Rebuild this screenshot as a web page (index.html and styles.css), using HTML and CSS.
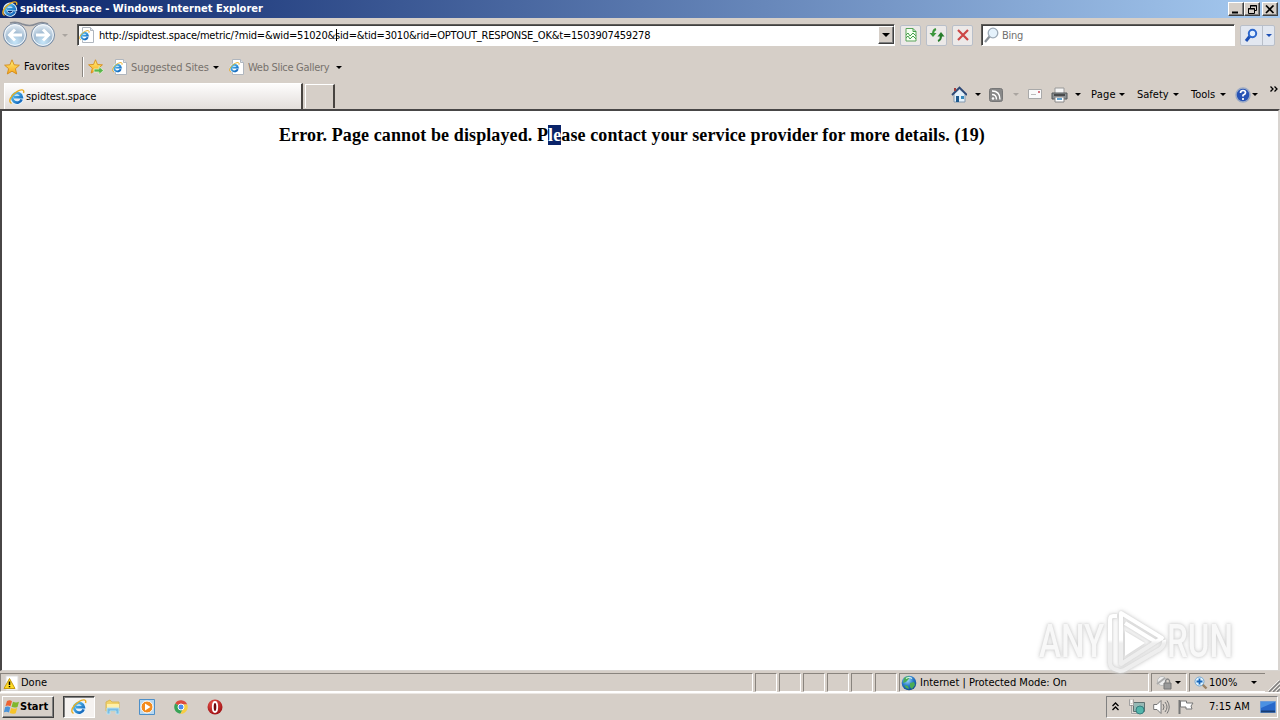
FILE: index.html
```html
<!DOCTYPE html>
<html lang="en">
<head>
    <meta charset="UTF-8">
    <meta name="viewport" content="width=device-width, initial-scale=1.0">
    <title>spidtest.space - Windows Internet Explorer</title>
    <link rel="stylesheet" href="styles.css">
</head>
<body>
    <!-- shared icons -->
    <svg class="defs" width="0" height="0">
        <defs>
            <linearGradient id="ieBlue" x1="0" y1="0" x2="1" y2="1">
                <stop offset="0" stop-color="#5cc8f4"/>
                <stop offset="1" stop-color="#0d5cb5"/>
            </linearGradient>
            <linearGradient id="gold" x1="0" y1="0" x2="0" y2="1">
                <stop offset="0" stop-color="#fff27a"/>
                <stop offset="1" stop-color="#f7a51a"/>
            </linearGradient>
            <radialGradient id="navBall" cx=".5" cy=".8" r=".8">
                <stop offset="0" stop-color="#c5e6fa"/>
                <stop offset=".5" stop-color="#a4bdd3"/>
                <stop offset="1" stop-color="#edf4fa"/>
            </radialGradient>
            <radialGradient id="globe" cx=".4" cy=".3" r=".8">
                <stop offset="0" stop-color="#a5dcff"/>
                <stop offset=".5" stop-color="#2779c9"/>
                <stop offset="1" stop-color="#0b3f7d"/>
            </radialGradient>
            <radialGradient id="red" cx=".4" cy=".3" r=".8">
                <stop offset="0" stop-color="#ee5a50"/>
                <stop offset="1" stop-color="#96060b"/>
            </radialGradient>
            <linearGradient id="fade" gradientUnits="userSpaceOnUse" x1="0" y1="0" x2="0" y2="64">
                <stop offset=".5" stop-color="#fff"/>
                <stop offset=".55" stop-color="#eee"/>
            </linearGradient>
        </defs>
        <symbol id="ie" viewBox="0 0 16 16">
            <path d="M12.8 10.2A5 5 0 1 1 13 8H5" fill="none" stroke="#e6f6ff" stroke-width="4"/>
            <path d="M12.6 10.4A4.8 4.8 0 1 1 12.8 8.1H5" fill="none" stroke="url(#ieBlue)" stroke-width="2.7"/>
            <path d="M2.6 14.4C-1.4 12.7 2 6 7.5 2.8 12-.1 15.8.2 14.5 4" fill="none" stroke="#e9ac22" stroke-width="1.4"/>
        </symbol>
        <symbol id="iepage" viewBox="0 0 16 16">
            <path d="M3.5.5h8l3 3v12h-11z" fill="#fff" stroke="#b0b6be"/>
            <path d="M11.5.5v3h3" fill="#dde4ea" stroke="#b0b6be"/>
            <use href="#ie" x="0" y="3" width="11" height="11"/>
        </symbol>
        <symbol id="star" viewBox="0 0 16 16">
            <path d="M8 .8l2.1 5 5.3.4-4 3.5 1.3 5.3L8 12.2l-4.7 2.8 1.3-5.3-4-3.5 5.3-.4z" fill="url(#gold)" stroke="#d48a17" stroke-width=".9"/>
        </symbol>
    </svg>

    <div class="window">
        <header class="titlebar">
            <svg class="i16"><use href="#ie"/></svg>
            <span class="title">spidtest.space - Windows Internet Explorer</span>
            <div class="winbtns">
                <div class="winbtn"><svg width="11" height="9"><path d="M1 7.5h6" stroke="#000" stroke-width="2"/></svg></div>
                <div class="winbtn"><svg width="11" height="9"><path d="M3.5 3V.5h6v5H8M3 1h7M1.500 3.500h6v5h-6zM1 4h7" fill="none" stroke="#000"/></svg></div>
                <div class="winbtn close"><svg width="10" height="9"><path d="M1 .5l7.500 7.500M8.500.5L1 8" stroke="#000" stroke-width="1.700"/></svg></div>
            </div>
        </header>

        <div class="addressrow">
            <svg class="nav" width="54" height="28" viewBox="0 0 54 28">
                <path d="M8 2q6-2 12 1 8 3 14 0 6-3 12 0" fill="none" stroke="#868b95" stroke-width="1.500"/>
                <circle cx="13" cy="14" r="11.500" fill="url(#navBall)" stroke="#798ba2"/>
                <circle cx="41" cy="14" r="11.500" fill="url(#navBall)" stroke="#798ba2"/>
                <circle cx="13" cy="14" r="10.300" fill="none" stroke="#f4f8fc"/>
                <circle cx="41" cy="14" r="10.300" fill="none" stroke="#f4f8fc"/>
                <path d="M20 14H8M13 8.500L7.500 14l5.500 5.500M34 14h12M41 8.500l5.500 5.500-5.500 5.500" fill="none" stroke="#fff" stroke-width="3"/>
            </svg>
            <i class="arrow pale"></i>
            <div class="address">
                <svg class="i16"><use href="#iepage"/></svg>
                <span class="url">http://spidtest.space/metric/?mid=&amp;wid=51020&amp;sid=&amp;tid=3010&amp;rid=OPTOUT_RESPONSE_OK&amp;t=1503907459278</span>
                <div class="caret"></div>
                <div class="drop"><i class="arrow big"></i></div>
            </div>
            <div class="tool">
                <svg width="14" height="16"><path d="M2 1.500h7l3 3v9.500H2z" fill="#f5fff2" stroke="#5ba35b"/><path d="M9 1.500v3h3M2 8l2-2 2 3 3-3 3 3M2 11l2-2 2 3 3-3 3 3" fill="none" stroke="#45a04b"/></svg>
            </div>
            <div class="tool">
                <svg width="16" height="16"><path d="M7 2Q4 3 4 7" fill="none" stroke="#3d963c" stroke-width="2"/><path d="M.5 6h7L4 10z" fill="#3d963c"/><path d="M9 14q3-1 3-5" fill="none" stroke="#267c2b" stroke-width="2"/><path d="M8.500 9.500h7L12 5z" fill="#267c2b"/></svg>
            </div>
            <div class="tool">
                <svg width="14" height="14"><path d="M2 2l10 10M12 2L2 12" stroke="#cc4747" stroke-width="2.200"/></svg>
            </div>
            <div class="search">
                <svg width="16" height="17"><path d="M6 9l-5 6" stroke="#8b9299" stroke-width="2.300"/><circle cx="9" cy="6" r="4.800" fill="#e5f2fc" stroke="#9daab7" stroke-width="1.300"/></svg>
                <span>Bing</span>
            </div>
            <div class="tool go">
                <svg width="15" height="15"><path d="M6 8l-4 5" stroke="#1c4fb4" stroke-width="3"/><circle cx="8.500" cy="5.500" r="3.700" fill="#e2efff" stroke="#2c67cd" stroke-width="2"/></svg>
                <div class="split"><i class="arrow blue"></i></div>
            </div>
        </div>

        <div class="favrow">
            <svg class="i16"><use href="#star"/></svg>
            <span class="favorites">Favorites</span>
            <div class="sep"></div>
            <svg class="i16"><use href="#star" width="15" height="15"/><path d="M6 10h5V7.500l4.500 4-4.500 4V13H6z" fill="#58b64a" stroke="#edf9df" stroke-width=".7"/></svg>
            <svg class="i16 page"><use href="#iepage"/></svg>
            <span class="link suggested">Suggested Sites</span>
            <i class="arrow"></i>
            <svg class="i16 page2"><use href="#iepage"/></svg>
            <span class="link slice">Web Slice Gallery</span>
            <i class="arrow"></i>
        </div>

        <div class="tabrow">
            <div class="tab">
                <svg class="i16"><use href="#ie"/></svg>
                <span>spidtest.space</span>
            </div>
            <div class="newtab"></div>
            <div class="commands">
                <svg class="home" width="16" height="17"><path d="M3 8v8h11V8L8.500 3z" fill="#e4f1fa" stroke="#8499ae"/><path d="M1 9l7.500-7.500L16 9" fill="none" stroke="#2c4876" stroke-width="1.800"/><path d="M4 2v3" stroke="#a43e3e" stroke-width="2"/><path d="M5 10h3v6H5z" fill="#1d598e"/><path d="M10 10h3v3h-3z" fill="#3589bd"/></svg>
                <i class="arrow"></i>
                <svg class="rss" width="15" height="15"><rect x=".5" y=".5" width="13" height="13" rx="2" fill="#888"  stroke="#777"/><circle cx="4" cy="10.500" r="1.300" fill="#fff"/><path d="M3 6.500q4.500 0 4.500 5M3 3q8 0 8 8.500" fill="none" stroke="#fff" stroke-width="1.400"/></svg>
                <i class="arrow pale"></i>
                <svg class="mail" width="15" height="11"><path d="M.5.5h13v9H.5z" fill="#fafafa" stroke="#a9a9a9"/><path d="M10 2h2v2h-2z" fill="#d77480"/><path d="M3 5.500h5" stroke="#bbb"/></svg>
                <svg class="print" width="17" height="16"><path d="M4 1h9v6H4z" fill="#f5f5f5" stroke="#999"/><path d="M1 6h15v6H1z" fill="#8b9093" stroke="#535659"/><path d="M3 8h11" stroke="#333" stroke-width="1.500"/><path d="M4 10h9v5H4z" fill="#fff" stroke="#888"/><path d="M6 12h5" stroke="#2d85c2" stroke-width="1.500"/></svg>
                <i class="arrow"></i>
                <span class="cmd c1">Page</span><i class="arrow"></i>
                <span class="cmd c2">Safety</span><i class="arrow"></i>
                <span class="cmd c3">Tools</span><i class="arrow"></i>
                <svg class="help" width="16" height="16"><circle cx="8" cy="8" r="7" fill="#2753b5" stroke="#9baac5" stroke-width="1.500"/><path d="M5.500 6q0-2.500 2.500-2.500t2.500 2.200Q10.500 7 8 8.300v1.200M8 11v2" fill="none" stroke="#fff" stroke-width="1.700"/></svg>
                <i class="arrow"></i>
                <svg class="more" width="8" height="6"><path d="M.5.500L3 3 .5 5.500M4.500.500L7 3 4.500 5.500" fill="none" stroke="#000" stroke-width="1.300"/></svg>
            </div>
        </div>

        <main class="content">
            <h1>Error. Page cannot be displayed. P<mark>le</mark>ase contact your service provider for more details. (19)</h1>
            <div class="watermark">
                <span class="any">ANY</span>
                <svg width="62" height="66" viewBox="0 0 62 66">
                    <path d="M12 8H8q-3 0-3 4v43q0 4 4 6l6 2q3 0 6-2l34-20q5-4 4-9" fill="none" stroke="url(#fade)" stroke-width="4"/>
                    <path d="M16 56V5l41 25zM20 15l31 19" fill="none" stroke="url(#fade)" stroke-width="4" stroke-linejoin="round"/>
                    <path d="M20 23l20 12-20 13z" fill="#fff"/>
                </svg>
                <span class="run">RUN</span>
            </div>
        </main>

        <div class="statusbar">
            <div class="panel done">
                <svg width="16" height="16"><path d="M3 1h12v14H3z" fill="#fff" stroke="#ddd"/><path d="M6.500 3.500L1 13.500h11z" fill="#ffdc25" stroke="#c69a10"/><path d="M6.500 6.500v3.500M6.500 11v1.300" stroke="#000" stroke-width="1.500"/></svg>
                <span>Done</span>
            </div>
            <div class="panel small"></div>
            <div class="panel small"></div>
            <div class="panel small"></div>
            <div class="panel small"></div>
            <div class="panel small"></div>
            <div class="panel small"></div>
            <div class="panel zone">
                <svg width="16" height="16"><circle cx="8" cy="8" r="7.300" fill="url(#globe)"/><path d="M3 3q4-3 6-1L7 5 5 7 2 8zM9 8l4-1 1 3-3 4-2-2zM3 10l4 1 1 3-3-1z" fill="#4bac55"/><path d="M5 3.500q3-2 6 0" fill="none" stroke="#d9f6ee" stroke-width="1.200"/></svg>
                <span>Internet | Protected Mode: On</span>
            </div>
            <div class="panel lock">
                <svg width="17" height="15"><circle cx="6" cy="6" r="4.500" fill="#eee" stroke="#bbb"/><path d="M1 9l8-6" stroke="#aaa" stroke-width="2"/><path d="M8 8h7v6H8z" fill="#999" stroke="#777"/><path d="M9.500 8V5.500q2-3 4 0V8" fill="none" stroke="#888" stroke-width="1.300"/></svg>
                <i class="arrow"></i>
            </div>
            <div class="panel zoom">
                <svg width="14" height="14"><path d="M8 8l4.500 4.500" stroke="#9a8265" stroke-width="2.400"/><circle cx="5.500" cy="5.500" r="4.500" fill="#dff3ff" stroke="#75a7d1"/><path d="M5.500 2.500v6M2.500 5.500h6" stroke="#1765b9" stroke-width="1.800"/></svg>
                <span>100%</span>
                <i class="arrow"></i>
            </div>
            <svg class="grip" width="12" height="12"><path d="M1 12L12 1M5 12l7-7M9 12l3-3" stroke="#808080" stroke-width="1.500"/><path d="M0 11L11 0M4 11l8-8M8 11l4-4" stroke="#fff" stroke-width=".7"/></svg>
        </div>
    </div>

    <footer class="taskbar">
        <div class="start">
            <svg width="16" height="16"><path d="M3 2q3-1.500 5 .2L6.500 7.300Q4 5.700 1.500 7z" fill="#ed6332"/><path d="M9 2.700q3 1.500 6 0L13.500 8q-3 1.300-6-.2z" fill="#80b72e"/><path d="M1.200 8q2.800-1.200 5 .4L5 13.500Q2.500 12-.1 13.200z" fill="#4a93d9"/><path d="M7.200 9q3 1.500 6 0l-1.500 5.200q-3 1.300-6-.2z" fill="#f7c429"/></svg>
            <span>Start</span>
        </div>
        <div class="task"><svg class="i16"><use href="#ie"/></svg></div>
        <svg class="explorer" width="16" height="16"><path d="M1 3l4-2 2 2h7v9H1z" fill="#f2d267" stroke="#d8b758"/><path d="M2 5h12v5H2z" fill="#fff0a8"/><path d="M2 9h12v6h-3v-3H5v3H2z" fill="#79bde4" stroke="#b9e1f2"/></svg>
        <svg class="media" width="16" height="16"><path d="M.5.500h15v15H.5z" fill="#b7d8f1" stroke="#4d8fc8"/><circle cx="8" cy="8" r="6" fill="#f38b1d" stroke="#fff"/><path d="M6 4.500L11.500 8 6 11.500z" fill="#fff"/></svg>
        <svg class="chrome" width="14" height="14" viewBox="0 0 14 14"><path d="M7 7L1.200 3.500A6.700 6.700 0 0 1 13.200 4.500H7z" fill="#dd4b3e"/><path d="M7 7l-5.800-3.500A6.700 6.700 0 0 0 6.300 13.700L9.500 8.500z" fill="#38a356"/><path d="M7 4.500h6.200A6.700 6.700 0 0 1 6.300 13.700L9.500 8.500z" fill="#f7cd43"/><circle cx="7" cy="7" r="3" fill="#4c8bed" stroke="#fff"/></svg>
        <svg class="opera" width="16" height="16"><circle cx="8" cy="8" r="7.500" fill="url(#red)"/><ellipse cx="8" cy="8" rx="2.200" ry="5" fill="#70090d" stroke="#fff" stroke-width="1.800"/></svg>
        <div class="tray">
            <svg class="chev" width="7" height="9"><path d="M.5 4L3.500 1l3 3M.5 8l3-3 3 3" fill="none" stroke="#000" stroke-width="1.300"/></svg>
            <svg class="net" width="16" height="16"><path d="M4.500 3.500h11v9h-11z" fill="#96b9b5" stroke="#5e7171"/><path d="M2.500 7v7.500H8M.8 1v5h3.500V1M2.500 1v3" fill="none" stroke="#fff" stroke-width="1.300"/><path d="M.5.500v6h4v-6M2.500 6.500v8H8" fill="none" stroke="#666" stroke-width=".6"/><circle cx="11" cy="11" r="4" fill="#53b6ab" stroke="#347f80"/></svg>
            <svg class="sound" width="17" height="16"><path d="M.7 5.500H4l4-4v13l-4-4H.7z" fill="#fff" stroke="#777"/><path d="M10 5q2 3 0 6M12 3q4 5 0 10M14 1.500q4.500 6.500 0 13" fill="none" stroke="#777"/></svg>
            <svg class="flag" width="16" height="16"><path d="M1.500 1v14" stroke="#777" stroke-width="2"/><path d="M2.500 2h6v2H15l-2 3 1 3H8V8H2.500z" fill="#fff" stroke="#777"/></svg>
            <span class="clock">7:15 AM</span>
            <svg class="desktop" width="16" height="14"><path d="M.5 1.500h15v11H.5z" fill="#2868ca" stroke="#6c9bd7"/><path d="M1 2h14L1 8z" fill="#4b91e2"/><path d="M1 11.500h14" stroke="#183d74" stroke-width="2"/></svg>
        </div>
    </footer>
</body>
</html>
```
FILE: styles.css
```css
* {
    box-sizing: border-box;
}

body {
    margin: 0;
    height: 720px;
    overflow: hidden;
    display: flex;
    flex-direction: column;
    background: #d6cfc8;
    color: #000;
    font-family: 'DejaVu Sans Condensed', 'DejaVu Sans', sans-serif;
    font-size: 11px;
    line-height: 14px;
    white-space: nowrap;
}

svg {
    display: block;
    flex: none;
}

.defs {
    position: absolute;
}

.i16 {
    width: 16px;
    height: 16px;
}

.window {
    height: 693px;
    display: flex;
    flex-direction: column;
}

.arrow {
    flex: none;
    border: 3px solid transparent;
    border-top-color: #000;
    border-bottom: 0;
}

.arrow.big {
    border-width: 4px 4px 0;
}

.arrow.pale {
    border-top-color: #aaa5a0;
}

.arrow.blue {
    border-top-color: #1c4fb4;
}

/* title bar */
.titlebar {
    height: 18px;
    padding: 0 2px;
    display: flex;
    align-items: center;
    background: linear-gradient(90deg, #0a246a, #a6caf0);
}

.title {
    margin-left: 2px;
    width: 244px;
    color: #fff;
    font-weight: bold;
    letter-spacing: 0.02px;
}

.winbtns {
    display: flex;
    margin-left: auto;
}

.winbtn {
    width: 16px;
    height: 14px;
    display: flex;
    align-items: center;
    justify-content: center;
    background: #d6cfc8;
    border: 1px solid;
    border-color: #fff #404040 #404040 #fff;
    box-shadow: inset -1px -1px #808080;
}

.winbtn.close {
    margin-left: 2px;
}

/* address bar */
.addressrow {
    height: 34px;
    padding-left: 2px;
    display: flex;
    align-items: center;
}

.addressrow > .arrow {
    margin: 0 9px 0 6px;
}

.address {
    position: relative;
    width: 818px;
    height: 22px;
    margin-right: 5px;
    padding-left: 1px;
    display: flex;
    align-items: center;
    background: #fff;
    border: 1px solid;
    border-color: #605e5a #fff #fff #605e5a;
    box-shadow: inset 1px 1px #404040;
}

.url {
    width: 552px;
    margin-left: 4px;
    padding-top: 2px;
    letter-spacing: -0.2px;
}

.caret {
    position: absolute;
    left: 258px;
    top: 4px;
    width: 1px;
    height: 12px;
    background: #000;
}

.drop {
    width: 16px;
    height: 18px;
    margin-left: auto;
    display: flex;
    align-items: center;
    justify-content: center;
    background: #d6cfc8;
    border: 1px solid;
    border-color: #fff #404040 #404040 #fff;
    box-shadow: inset -1px -1px #808080;
}

.tool {
    width: 21px;
    height: 21px;
    margin-right: 5px;
    display: flex;
    align-items: center;
    justify-content: center;
    background: #ece9e8;
    border: 1px solid #b9bfc9;
    border-radius: 2px;
}

.search {
    width: 254px;
    height: 22px;
    margin: 0 5px 0 3px;
    padding-left: 2px;
    display: flex;
    align-items: center;
    background: #fff;
    border: 1px solid;
    border-color: #605e5a #fff #fff #605e5a;
    box-shadow: inset 1px 1px #404040;
    color: #707070;
}

.search span {
    margin-left: 2px;
    padding-top: 2px;
    letter-spacing: -0.3px;
}

.tool.go {
    width: 35px;
    margin: 0;
    background: #e2e7f0;
}

.split {
    height: 19px;
    margin-left: 3px;
    padding-left: 3px;
    display: flex;
    align-items: center;
    border-left: 1px solid #b9bfc9;
}

/* favorites bar */
.favrow {
    height: 30px;
    padding-left: 4px;
    display: flex;
    align-items: center;
}

.favorites {
    width: 46px;
    margin: 0 12px 0 4px;
    letter-spacing: 0.1px;
}

.sep {
    width: 2px;
    height: 20px;
    margin-right: 4px;
    border-left: 1px solid #8b8680;
    border-right: 1px solid #fff;
}

.page {
    margin-left: 8px;
}

.page2 {
    margin-left: 10px;
}

.link {
    margin-left: 3px;
    padding-top: 1px;
    color: #77726d;
    letter-spacing: -0.15px;
}

.suggested {
    width: 82px;
}

.slice {
    width: 88px;
    letter-spacing: -0.3px;
}

/* tabs and command bar */
.tabrow {
    height: 27px;
    padding-left: 4px;
    display: flex;
    align-items: flex-end;
}

.tab {
    width: 299px;
    height: 26px;
    padding-left: 4px;
    display: flex;
    align-items: center;
    background: linear-gradient(#fdfcfc, #e3dedb);
    border-top: 1px solid #fff;
    border-left: 1px solid #fff;
    border-right: 2px solid #484440;
}

.tab span {
    margin-left: 1px;
    letter-spacing: -0.1px;
}

.newtab {
    width: 30px;
    height: 24px;
    margin: 0 0 1px 2px;
    align-self: flex-end;
    border: 1px solid #fff;
    border-bottom: 0;
    border-right: 2px solid #484440;
}

.commands {
    height: 26px;
    margin-left: 616px;
    padding-bottom: 3px;
    display: flex;
    align-items: center;
}

.home { margin-right: 8px; }
.rss { margin: 1px 9px 0 8px; }
.mail { margin: 0 8px 0 9px; }
.print { margin-right: 7px; }

.cmd {
    margin-right: 3px;
}

.c1 { width: 25px; margin-left: 10px; letter-spacing: 0.2px; }
.c2 { width: 33px; margin-left: 12px; }
.c3 { width: 26px; margin-left: 12px; }

.help {
    margin: 0 1px 0 9px;
}

.more {
    margin: -12px 0 0 12px;
}

/* page */
.content {
    position: relative;
    height: 562px;
    background: #fff;
    border: 2px solid #484646;
    border-right-color: #d8d4d0;
    border-bottom: 1px solid #d8d4d0;
}

h1 {
    margin: 14px 0 0 277px;
    font-family: 'Liberation Serif', serif;
    font-size: 18px;
    line-height: 20px;
    font-weight: bold;
    letter-spacing: 0.105px;
}

mark {
    display: inline-block;
    height: 20px;
    background: #0a246a;
    color: #fff;
}

.watermark {
    position: absolute;
    left: 1037px;
    top: 497px;
    display: flex;
    align-items: center;
    font-family: Roboto, sans-serif;
    font-size: 46px;
    font-weight: 500;
    line-height: 64px;
    filter: drop-shadow(0 0 1px #d2d2d2) drop-shadow(0 0 2px #d8d8d8);
}

.watermark span {
    width: 66px;
    transform: scaleX(0.72);
    transform-origin: left;
}

.any, .run {
    color: #f8f8f8;
}

/* status bar */
.statusbar {
    height: 22px;
    padding-top: 2px;
    display: flex;
    border-bottom: 1px solid #fff;
}

.panel {
    height: 19px;
    margin-right: 2px;
    display: flex;
    align-items: center;
    border: 1px solid;
    border-color: #89847e #fff #fff #89847e;
}

.panel span {
    padding-top: 1px;
}

.done {
    width: 753px;
    padding-left: 2px;
}

.done span {
    margin-left: 2px;
}

.small {
    width: 22px;
}

.zone {
    width: 250px;
    padding-left: 1px;
}

.zone span {
    margin-left: 3px;
}

.lock {
    width: 36px;
    padding-left: 4px;
}

.lock .arrow {
    margin-left: 2px;
}

.zoom {
    width: 76px;
    padding-left: 4px;
    border-right: 0;
}

.zoom span {
    width: 29px;
    margin: 0 13px 0 1px;
}

.grip {
    margin: 7px 0 0 1px;
}

/* taskbar */
.taskbar {
    height: 27px;
    padding: 1px 2px 2px;
    display: flex;
    align-items: center;
    border-top: 1px solid #ece8e4;
}

.start {
    width: 52px;
    height: 22px;
    padding-left: 1px;
    display: flex;
    align-items: center;
    font-weight: bold;
    border: 1px solid;
    border-color: #fff #404040 #404040 #fff;
    box-shadow: inset -1px -1px #808080;
}

.task {
    width: 32px;
    height: 22px;
    margin-left: 9px;
    display: flex;
    align-items: center;
    justify-content: center;
    background: #f5f2f0;
    border: 1px solid;
    border-color: #404040 #fff #fff #404040;
    box-shadow: inset 1px 1px #808080;
}

.explorer { margin-left: 10px; }
.media { margin-left: 18px; }
.chrome { margin-left: 19px; }
.opera { margin-left: 19px; }

.tray {
    width: 172px;
    height: 22px;
    margin-left: auto;
    padding-left: 5px;
    display: flex;
    align-items: center;
    border: 1px solid;
    border-color: #808080 #fff #fff #808080;
}

.net { margin-left: 10px; }
.sound { margin-left: 8px; }
.flag { margin-left: 8px; }

.clock {
    width: 42px;
    margin: 0 9px 0 15px;
}
```
